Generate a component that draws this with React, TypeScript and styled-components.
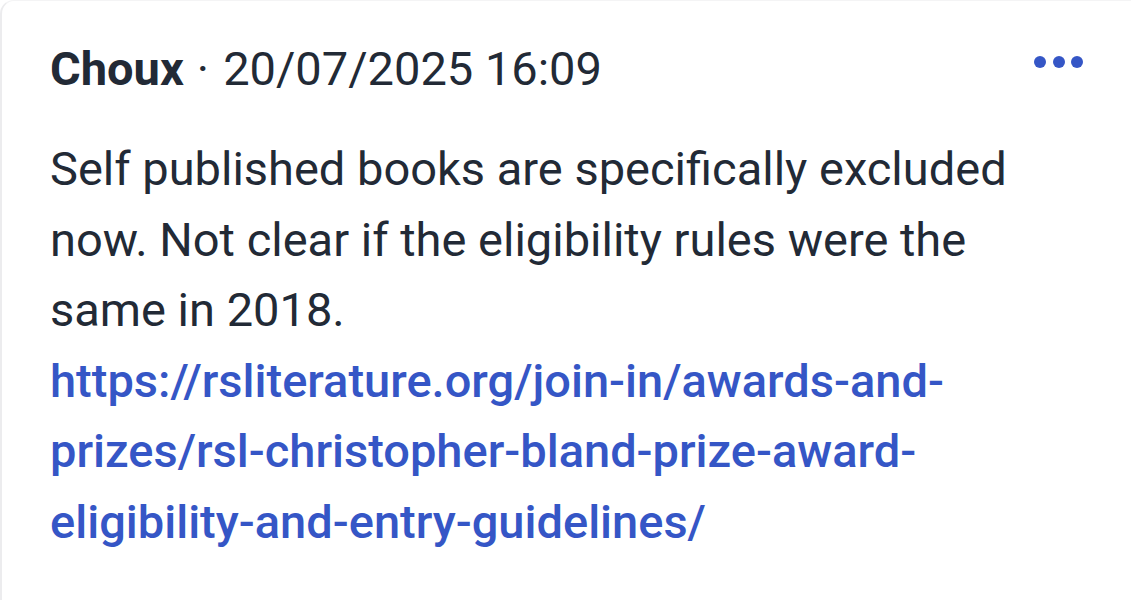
import React from 'react';
import styled, { createGlobalStyle } from 'styled-components';

const GlobalStyle = createGlobalStyle`
  html, body {
    margin: 0;
    padding: 0;
    background: #ffffff;
  }
  body {
    font-family: Roboto, "Noto Sans", "Liberation Sans", sans-serif;
  }
`;

const Card = styled.div`
  box-sizing: border-box;
  width: 1131px;
  height: 600px;
  overflow: hidden;
  background: #ffffff;
  border-left: 2px solid #ececee;
  border-top: 1px solid #f4f4f5;
  border-top-left-radius: 14px;
  padding: 36px 48px 0 48px;
`;

const Header = styled.div`
  display: flex;
  align-items: center;
  justify-content: space-between;
  height: 62px;
`;

const Meta = styled.div`
  font-size: 47px;
  color: #222a36;
`;

const Author = styled.span`
  font-weight: 700;
`;

const Sep = styled.span`
  margin: 0 14px 0 13px;
`;

const MoreButton = styled.button`
  display: flex;
  gap: 6.5px;
  padding: 0;
  margin: 0 0 12px 0;
  border: none;
  background: none;
  cursor: pointer;
`;

const Dot = styled.span`
  width: 12px;
  height: 12px;
  border-radius: 50%;
  background: #3556c6;
`;

const Body = styled.p`
  margin: 35px 0 0 0;
  font-size: 47px;
  line-height: 70.5px;
  color: #222a36;
`;

const Link = styled.a`
  color: #3556c6;
  font-weight: 500;
  text-decoration: none;
`;

export default function App() {
  return (
    <>
      <GlobalStyle />
      <Card>
        <Header>
          <Meta>
            <Author>Choux</Author>
            <Sep>·</Sep>
            20/07/2025 16:09
          </Meta>
          <MoreButton aria-label="More">
            <Dot />
            <Dot />
            <Dot />
          </MoreButton>
        </Header>
        <Body>
          Self published books are specifically excluded
          <br />
          now. Not clear if the eligibility rules were the
          <br />
          same in 2018.
          <br />
          <Link href="#">
            https://rsliterature.org/join-in/awards-and-
            <br />
            prizes/rsl-christopher-bland-prize-award-
            <br />
            eligibility-and-entry-guidelines/
          </Link>
        </Body>
      </Card>
    </>
  );
}
